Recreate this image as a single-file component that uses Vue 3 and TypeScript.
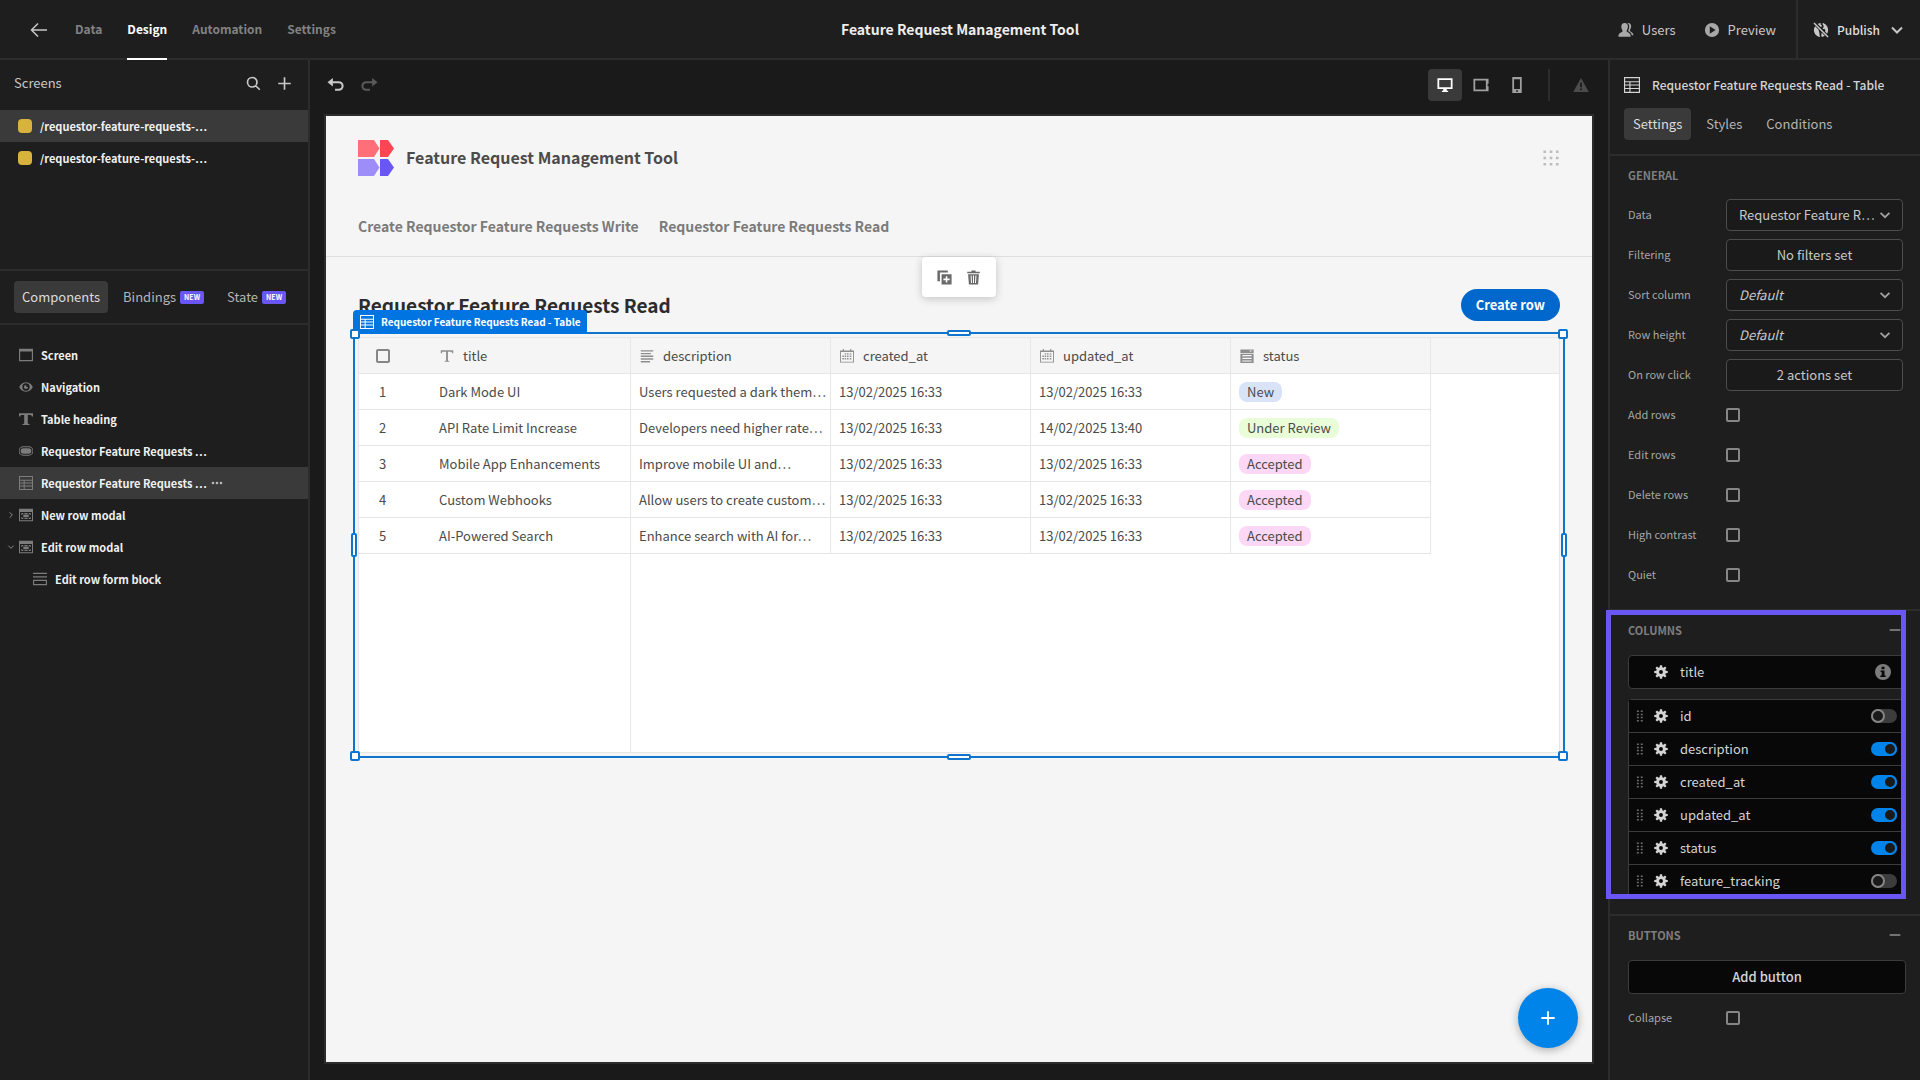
<script setup lang="ts">
import { h, ref } from 'vue'

interface Glyph {
  d: string
  stroke?: number
}

// All glyphs are drawn on an 18 x 18 grid.
const glyphs: Record<string, Glyph> = {
  back: { d: 'M17 9H1.5M8 2.5 1.5 9 8 15.500', stroke: 1.5 },
  search: { d: 'M7.500 1.800a5.700 5.700 0 1 0 0 11.400a5.700 5.700 0 1 0 0-11.400M11.700 11.700 16.500 16.500', stroke: 2 },
  plus: { d: 'M9 1.500V16.500M1.500 9H16.500', stroke: 2 },
  undo: { d: 'M5 5.500H12.500a4 4 0 0 1 0 8H8.500', stroke: 2.2 },
  undoHead: { d: 'M6.200 1V10L0.500 5.500Z' },
  chevron: { d: 'M4 6.500 9 11.500 14 6.500', stroke: 2 },
  chevronRight: { d: 'M6 3 12 9 6 15', stroke: 2 },
  chevronDown: { d: 'M3 6 9 12 15 6', stroke: 2 },
  minus: { d: 'M3 9H15', stroke: 2 },
  more: { d: 'M1 9a2 2 0 1 0 4 0a2 2 0 1 0-4 0M7 9a2 2 0 1 0 4 0a2 2 0 1 0-4 0M13 9a2 2 0 1 0 4 0a2 2 0 1 0-4 0' },
  users: {
    d: 'M7.500 1C10 1 11.200 2.900 11.200 5.200C11.200 7 10.600 8.300 9.800 9.300V10.800C9.800 11.300 14 12.200 14.200 15.500V16.500H0.500V15.500C0.700 12.200 5 11.300 5 10.800V9.300C4.300 8.300 3.700 7 3.700 5.200C3.700 2.900 5 1 7.500 1ZM10.500 1.200C13 0.500 14.800 2 14.800 4.800C14.800 6.500 14.200 7.700 13.500 8.500V10C13.500 10.600 17.300 11.500 17.500 15H15.500C15.200 12.500 13.500 11.300 11.500 10.500V9.500C12.200 8.500 12.600 7 12.600 5.200C12.600 3.500 11.900 2 10.500 1.200Z',
  },
  play: { d: 'M9 1a8 8 0 1 0 0 16a8 8 0 1 0 0-16ZM6.500 4.900 13 9 6.500 13.100Z' },
  globeOff: {
    d: 'M1.700 0.500 17.500 16.300 16.300 17.500 0.500 1.700ZM5.400 2.200C6.400 1.600 7.500 1.200 8.700 1.100C8.300 2 8.500 3 9.500 3.500C10.500 4 10 5 9 5.800ZM10.800 1.200C14.300 2 17 5.100 17 9C17 10.500 16.600 11.900 15.800 13.100L13.500 10.800C14.500 9.500 14 8 12.500 7.800L10.500 7.600C11.500 6.500 12.500 5.500 11.800 4.200C11.300 3.200 10.500 2.500 10.800 1.200ZM2.300 4.700 6.400 8.800C6 10.500 7.500 11 7.200 12.500C7 13.800 7.500 15 8 16.900C4.100 16.400 1 13.100 1 9C1 7.400 1.500 5.900 2.300 4.700ZM9.800 12.200 13.200 15.600C12.200 16.300 11.100 16.800 9.900 16.900C9.300 15.500 9.200 13.500 9.800 12.200Z',
  },
  desktop: { d: 'M0.500 1.500H17.500V13.500H11V15.500H12.500V17H5.500V15.500H7V13.500H0.500ZM2.500 3.500V11.500H15.500V3.500Z' },
  tablet: { d: 'M0.500 2H17.500V7.500H16.500V10.500H17.500V16H0.500ZM2.500 4V14H14.500V4Z' },
  phone: { d: 'M3.700 0H14.300V18H3.700ZM5.700 2.500V13.500H12.300V2.500ZM8 15V16.500H10V15Z' },
  alert: { d: 'M9 1 17.800 17H0.200ZM8 6.500V11.500H10V6.500ZM8 13V15H10V13Z' },
  apps: { d: 'M0.500 0.500H3.500V3.500H0.500ZM7.500 0.500H10.500V3.500H7.500ZM14.500 0.500H17.500V3.500H14.500ZM0.500 7.500H3.500V10.500H0.500ZM7.500 7.500H10.500V10.500H7.500ZM14.500 7.500H17.500V10.500H14.500ZM0.500 14.500H3.500V17.500H0.500ZM7.500 14.500H10.500V17.500H7.500ZM14.500 14.500H17.500V17.500H14.500Z' },
  screen: { d: 'M0 1H18V17H0ZM1.500 4.500V15.500H16.500V4.500Z' },
  eye: { d: 'M9 3C4.500 3 1.500 6 0.300 9C1.500 12 4.500 15 9 15C13.500 15 16.500 12 17.700 9C16.500 6 13.500 3 9 3ZM9 4.300A4.700 4.700 0 1 1 9 13.700A4.700 4.700 0 1 1 9 4.300ZM9 6.300A2.700 2.700 0 1 0 11.700 9L9.500 8.700Z' },
  heading: { d: 'M0 1.500H18V5.800H16.500C16.300 4.300 15.500 4 14 4H11.300V14C11.300 15 12 15.300 13.500 15.300V16.800H4.500V15.300C6 15.300 6.700 15 6.700 14V4H4C2.500 4 1.700 4.300 1.500 5.800H0Z' },
  text: { d: 'M1 1.500H17V5.500H15.500C15.300 4 14.800 3.500 13.500 3.500H10.200V14C10.200 15 10.800 15.300 12 15.300V16.500H6V15.300C7.200 15.300 7.800 15 7.800 14V3.500H4.500C3.200 3.500 2.700 4 2.500 5.500H1Z' },
  pill: { d: 'M5.500 3H12.500a6 6 0 0 1 0 12H5.500a6 6 0 0 1 0-12ZM5.500 4.200a4.800 4.800 0 0 0 0 9.600H12.500a4.800 4.800 0 0 0 0-9.600ZM5.700 5.400H12.300a3.600 3.600 0 0 1 0 7.200H5.700a3.600 3.600 0 0 1 0-7.200Z' },
  table: { d: 'M0 0H18V18H0ZM1.300 1.300V4.700H16.700V1.300ZM1.300 6V8.300H6V6ZM7.300 6V8.300H16.700V6ZM1.300 9.600V12.300H6V9.600ZM7.300 9.600V12.300H16.700V9.600ZM1.300 13.600V16.700H6V13.600ZM7.300 13.600V16.700H16.700V13.600Z' },
  modal: { d: 'M0 1H18V17H0ZM1.300 5V15.700H16.700V5ZM3 6.500H5.500V7.800H4.300V9H3ZM7 6.500H11V7.800H7ZM12.500 6.500H15V9H13.700V7.800H12.500ZM3 11.500H4.300V12.700H5.500V14H3ZM7 12.700H11V14H7ZM13.700 11.500H15V14H12.500V12.700H13.700ZM5.500 8.500H12.500V12H5.500Z' },
  form: { d: 'M0 1H18V2.500H0ZM0 5.500H18V7H0ZM0 10H18V17H0ZM1.500 11.500V15.500H16.500V11.500Z' },
  lines: { d: 'M1 1.500H17V3.200H1ZM1 5H14V6.700H1ZM1 8.500H17V10.200H1ZM1 12H17V13.700H1ZM1 15.500H13V17.200H1Z' },
  calendar: { d: 'M3.500 0H5V2H13V0H14.500V2H18V17.500H0V2H3.500ZM1.200 3.800V16.300H16.800V3.800ZM6 5.500H8V7.200H6ZM9 5.500H11V7.200H9ZM12.500 5.500H14.500V7.200H12.500ZM3 8.500H5V10.200H3ZM6 8.500H8V10.200H6ZM9 8.500H11V10.200H9ZM12.500 8.500H14.500V10.200H12.500ZM3 11.700H5V13.500H3ZM6 11.700H8V13.500H6ZM9 11.700H11V13.500H9ZM12.500 11.700H14.500V13.500H12.500Z' },
  dropdown: { d: 'M0.500 0.500H17.500V5H0.500ZM12 1.800 13.700 3.800 15.400 1.800ZM0.500 6H17.500V18H0.500ZM3 7.800V9.200H15V7.800ZM3 11.300V12.700H15V11.300ZM3 14.700V16.100H15V14.700Z' },
  duplicate: { d: 'M0.500 0.500H13V3H3.500V13.500H0.500ZM5.500 5H17.500V17.500H5.500ZM10.500 7.500V10.300H7.700V12.200H10.500V15H12.400V12.200H15.200V10.300H12.400V7.500Z' },
  trash: { d: 'M6.500 0.500H11.500V2H16.500V4H1.500V2H6.500ZM2.500 5H15.500L14.500 17.500H3.500ZM5.500 6.500 6 15.500H7.200L6.700 6.500ZM8.400 6.500V15.500H9.600V6.500ZM11.300 6.500 10.800 15.500H12L12.500 6.500Z' },
  gear: { d: 'M7.600 0.300H10.400L10.700 2.900L12.100 3.500L14.200 1.900L16.100 3.800L14.500 5.900L15.100 7.300L17.700 7.600V10.400L15.100 10.700L14.500 12.100L16.100 14.200L14.200 16.100L12.100 14.500L10.700 15.100L10.400 17.700H7.600L7.300 15.100L5.900 14.500L3.800 16.100L1.900 14.200L3.500 12.100L2.900 10.700L0.300 10.400V7.600L2.900 7.300L3.500 5.900L1.900 3.800L3.800 1.900L5.900 3.500L7.300 2.900ZM9 6.500a2.500 2.500 0 1 0 0 5a2.500 2.500 0 1 0 0-5Z' },
  info: { d: 'M9 0a9 9 0 1 0 0 18a9 9 0 1 0 0-18ZM7.300 3H10.700V6H7.300ZM6.300 7.300H10.700V12.800H12V14.500H6V12.800H7.500V9H6.300Z' },
  grip: { d: 'M5 2H7.500V4H5ZM10 2H12.500V4H10ZM5 6H7.500V8H5ZM10 6H12.500V8H10ZM5 10H7.500V12H5ZM10 10H12.500V12H10ZM5 14H7.500V16H5ZM10 14H12.500V16H10Z' },
}

const Icon = (props: { name: string; size?: number }) => {
  const size = props.size ?? 14
  const names = props.name === 'undo' ? ['undo', 'undoHead'] : [props.name]
  return h(
    'svg',
    { viewBox: '0 0 18 18', width: size, height: size, 'aria-hidden': 'true' },
    names.map((n) => {
      const g = glyphs[n]
      return g.stroke
        ? h('path', { d: g.d, fill: 'none', stroke: 'currentColor', 'stroke-width': g.stroke })
        : h('path', { d: g.d, fill: 'currentColor', 'fill-rule': 'evenodd' })
    }),
  )
}
Icon.props = ['name', 'size']

const appName = 'Feature Request Management Tool'
const blockName = 'Requestor Feature Requests Read - Table'

const sections = ['Data', 'Design', 'Automation', 'Settings']
const screens = ['/requestor-feature-requests-…', '/requestor-feature-requests-…']

const tree = [
  { label: 'Screen', icon: 'screen' },
  { label: 'Navigation', icon: 'eye' },
  { label: 'Table heading', icon: 'heading' },
  { label: 'Requestor Feature Requests …', icon: 'pill' },
  { label: 'Requestor Feature Requests …', icon: 'table', selected: true },
  { label: 'New row modal', icon: 'modal', arrow: 'chevronRight' },
  { label: 'Edit row modal', icon: 'modal', arrow: 'chevronDown' },
  { label: 'Edit row form block', icon: 'form', child: true },
]

const gridColumns = [
  { name: 'title', icon: 'text' },
  { name: 'description', icon: 'lines' },
  { name: 'created_at', icon: 'calendar' },
  { name: 'updated_at', icon: 'calendar' },
  { name: 'status', icon: 'dropdown' },
]

const rows = [
  { title: 'Dark Mode UI', description: 'Users requested a dark them…', created: '13/02/2025 16:33', updated: '13/02/2025 16:33', status: 'New', tone: 'blue' },
  { title: 'API Rate Limit Increase', description: 'Developers need higher rate…', created: '13/02/2025 16:33', updated: '14/02/2025 13:40', status: 'Under Review', tone: 'green' },
  { title: 'Mobile App Enhancements', description: 'Improve mobile UI and…', created: '13/02/2025 16:33', updated: '13/02/2025 16:33', status: 'Accepted', tone: 'pink' },
  { title: 'Custom Webhooks', description: 'Allow users to create custom…', created: '13/02/2025 16:33', updated: '13/02/2025 16:33', status: 'Accepted', tone: 'pink' },
  { title: 'AI-Powered Search', description: 'Enhance search with AI for…', created: '13/02/2025 16:33', updated: '13/02/2025 16:33', status: 'Accepted', tone: 'pink' },
]

const settings = [
  { id: 'data', label: 'Data', type: 'select', value: 'Requestor Feature R…' },
  { id: 'filtering', label: 'Filtering', type: 'button', value: 'No filters set' },
  { id: 'sort', label: 'Sort column', type: 'select', value: 'Default', placeholder: true },
  { id: 'height', label: 'Row height', type: 'select', value: 'Default', placeholder: true },
  { id: 'click', label: 'On row click', type: 'button', value: '2 actions set' },
  { id: 'add', label: 'Add rows', type: 'check' },
  { id: 'edit', label: 'Edit rows', type: 'check' },
  { id: 'delete', label: 'Delete rows', type: 'check' },
  { id: 'contrast', label: 'High contrast', type: 'check' },
  { id: 'quiet', label: 'Quiet', type: 'check' },
]

const columns = ref([
  { name: 'id', on: false },
  { name: 'description', on: true },
  { name: 'created_at', on: true },
  { name: 'updated_at', on: true },
  { name: 'status', on: true },
  { name: 'feature_tracking', on: false },
])

const handles = ['tl', 'tr', 'bl', 'br', 'top', 'bottom', 'start', 'end']
</script>

<template>
  <div class="builder" lang="en">
    <header class="topbar">
      <div class="top-left">
        <button class="bare back" aria-label="Back"><Icon name="back" :size="18" /></button>
        <nav class="sections">
          <a v-for="s in sections" :key="s" href="#" :class="{ active: s === 'Design' }">{{ s }}</a>
        </nav>
      </div>
      <h1 class="app-title">{{ appName }}</h1>
      <div class="top-right">
        <button class="bare action"><Icon name="users" :size="16" />Users</button>
        <button class="bare action"><Icon name="play" :size="16" />Preview</button>
        <button class="bare action publish"><Icon name="globeOff" :size="16" />Publish<Icon name="chevron" :size="18" /></button>
      </div>
    </header>

    <div class="body">
      <aside class="left">
        <section class="screens">
          <div class="screens-head">
            <h2>Screens</h2>
            <button class="bare" aria-label="Search"><Icon name="search" :size="15" /></button>
            <button class="bare" aria-label="Add screen"><Icon name="plus" :size="15" /></button>
          </div>
          <a v-for="(s, i) in screens" :key="i" href="#" class="row screen-row" :class="{ selected: i === 0 }">
            <span class="swatch"></span><span class="label">{{ s }}</span>
          </a>
        </section>
        <div class="tabs left-tabs">
          <button class="tab active">Components</button>
          <button class="tab">Bindings<span class="new">NEW</span></button>
          <button class="tab">State<span class="new">NEW</span></button>
        </div>
        <div class="tree">
          <a v-for="(n, i) in tree" :key="i" href="#" class="row node" :class="{ selected: n.selected, child: n.child }">
            <span class="arrow"><Icon v-if="n.arrow" :name="n.arrow" :size="8" /></span>
            <Icon :name="n.icon" class="node-icon" />
            <span class="label">{{ n.label }}</span>
            <Icon v-if="n.selected" name="more" :size="12" class="more" />
          </a>
        </div>
      </aside>

      <main class="center">
        <div class="tools">
          <button class="bare" aria-label="Undo"><Icon name="undo" :size="17" /></button>
          <button class="bare redo" aria-label="Redo"><Icon name="undo" :size="17" class="flip" /></button>
          <div class="devices">
            <button class="device active" aria-label="Desktop"><Icon name="desktop" :size="16" /></button>
            <button class="device" aria-label="Tablet"><Icon name="tablet" :size="16" /></button>
            <button class="device" aria-label="Mobile"><Icon name="phone" :size="16" /></button>
          </div>
          <button class="bare warn" aria-label="Warnings"><Icon name="alert" :size="16" /></button>
        </div>

        <div class="canvas">
          <div class="app-head">
            <div class="brand">
              <svg class="logo" viewBox="0 0 36 36" width="36" height="36" aria-hidden="true">
                <path fill="#ff6f78" d="M0 0H16L21.500 8.500L16 17H0Z" />
                <path fill="#fe4553" d="M22 0H30L36 8.500L30 17H22Z" />
                <path fill="#9d8df8" d="M0 19H16L21.500 27.500L16 36H0Z" />
                <path fill="#6a56f5" d="M22 19H30L36 27.500L30 36H22Z" />
              </svg>
              <span class="brand-name">{{ appName }}</span>
              <button class="bare apps" aria-label="Apps"><Icon name="apps" :size="16" /></button>
            </div>
            <nav class="links">
              <a href="#">Create Requestor Feature Requests Write</a>
              <a href="#">Requestor Feature Requests Read</a>
            </nav>
          </div>

          <div class="page">
            <div class="page-head">
              <h2>Requestor Feature Requests Read</h2>
              <button class="create">Create row</button>
            </div>

            <div class="block">
              <table class="grid">
                <colgroup>
                  <col class="c-num" />
                  <col v-for="c in gridColumns" :key="c.name" class="c-data" />
                  <col />
                </colgroup>
                <thead>
                  <tr>
                    <th class="num"><input type="checkbox" class="box" aria-label="Select all rows" /></th>
                    <th v-for="c in gridColumns" :key="c.name" class="cell">
                      <span class="head"><Icon :name="c.icon" />{{ c.name }}</span>
                    </th>
                    <th></th>
                  </tr>
                </thead>
                <tbody>
                  <tr v-for="(r, i) in rows" :key="i">
                    <td class="num">{{ i + 1 }}</td>
                    <td class="cell">{{ r.title }}</td>
                    <td class="cell">{{ r.description }}</td>
                    <td class="cell">{{ r.created }}</td>
                    <td class="cell">{{ r.updated }}</td>
                    <td class="cell"><span class="badge" :class="r.tone">{{ r.status }}</span></td>
                  </tr>
                  <tr class="blank">
                    <td colspan="2"></td>
                    <td colspan="5"></td>
                  </tr>
                </tbody>
              </table>

              <div class="selection">
                <span v-for="p in handles" :key="p" class="handle" :class="p"></span>
                <div class="tag"><Icon name="table" />{{ blockName }}</div>
              </div>
              <div class="popover">
                <button class="bare" aria-label="Duplicate"><Icon name="duplicate" :size="15" /></button>
                <button class="bare" aria-label="Delete"><Icon name="trash" :size="15" /></button>
              </div>
            </div>
          </div>
          <button class="fab" aria-label="Add component"><Icon name="plus" :size="16" /></button>
        </div>
      </main>

      <aside class="right">
        <div class="right-head">
          <h2><Icon name="table" :size="16" />{{ blockName }}</h2>
          <div class="tabs right-tabs">
            <button class="tab active">Settings</button>
            <button class="tab">Styles</button>
            <button class="tab">Conditions</button>
          </div>
        </div>

        <section class="group general">
          <h3>GENERAL</h3>
          <div v-for="s in settings" :key="s.id" class="setting">
            <label :for="s.id">{{ s.label }}</label>
            <div v-if="s.type === 'select'" class="picker">
              <select :id="s.id" :class="{ placeholder: s.placeholder }">
                <option>{{ s.value }}</option>
              </select>
              <Icon name="chevron" :size="16" />
            </div>
            <button v-else-if="s.type === 'button'" :id="s.id" class="control">{{ s.value }}</button>
            <input v-else :id="s.id" type="checkbox" class="box" />
          </div>
        </section>

        <section class="group columns">
          <h3>COLUMNS<Icon name="minus" :size="16" /></h3>
          <div class="column primary">
            <span class="grip"></span><Icon name="gear" /><span class="column-name">title</span>
            <Icon name="info" :size="16" class="info" />
          </div>
          <div class="column-list">
            <label v-for="c in columns" :key="c.name" class="column">
              <Icon name="grip" class="grip" /><Icon name="gear" /><span class="column-name">{{ c.name }}</span>
              <input v-model="c.on" type="checkbox" role="switch" class="switch" />
            </label>
          </div>
          <div class="highlight"></div>
        </section>

        <section class="group">
          <h3>BUTTONS<Icon name="minus" :size="16" /></h3>
          <button class="add">Add button</button>
          <div class="setting">
            <label for="collapse">Collapse</label>
            <input id="collapse" type="checkbox" class="box" />
          </div>
        </section>
      </aside>
    </div>
  </div>
</template>

<style>
body {
  background: #1e1e1e;
}
</style>

<style scoped>
.builder,
.builder * {
  box-sizing: border-box;
}

.builder {
  display: flex;
  flex-direction: column;
  min-height: 100vh;
  background: #1e1e1e;
  color: #c8c8c8;
  font-family: 'Noto Sans CJK SC', 'Noto Sans', sans-serif;
  font-size: 13px;
  line-height: 20px;
}

svg {
  display: block;
  flex: none;
}

h1,
h2,
h3 {
  margin: 0;
}

a {
  color: inherit;
  text-decoration: none;
}

button,
select {
  font: inherit;
  color: inherit;
  cursor: pointer;
}

.bare {
  display: flex;
  align-items: center;
  padding: 0;
  border: 0;
  background: none;
}

.box {
  appearance: none;
  display: block;
  flex: none;
  width: 14px;
  height: 14px;
  margin: 0;
  border: 2px solid #868686;
  border-radius: 2px;
}

/* Top bar */
.topbar {
  display: grid;
  grid-template-columns: 1fr auto 1fr;
  height: 60px;
  border-bottom: 2px solid #2c2c2c;
}

.top-left {
  display: flex;
  padding-left: 30px;
  gap: 27px;
}

.sections {
  display: flex;
  gap: 25px;
  height: 60px;
  color: #828282;
  font-size: 12px;
  font-weight: 600;
}

.sections a {
  padding: 19px 0;
  border-bottom: 2px solid transparent;
}

.sections .active {
  border-color: #fff;
  color: #fff;
}

.app-title {
  align-self: center;
  padding-bottom: 2px;
  color: #ededed;
  font-size: 14px;
  font-weight: 600;
  line-height: 20px;
}

.top-right {
  display: flex;
  justify-content: flex-end;
  gap: 28px;
}

.action {
  gap: 8px;
}

.action svg {
  color: #a8a8a8;
}

.publish {
  margin-left: -8px;
  padding: 0 14px 0 15px;
  border-left: 2px solid #2c2c2c;
  color: #dedede;
  font-size: 12px;
  font-weight: 500;
}

.publish svg {
  color: #c8c8c8;
}

/* Layout */
.body {
  display: flex;
  flex: 1;
}

.left {
  flex: none;
  width: 310px;
  border-right: 2px solid #2c2c2c;
}

.center {
  display: flex;
  flex: 1;
  flex-direction: column;
  min-width: 0;
  padding: 0 14px 16px;
  background: #1a1a1a;
}

.right {
  flex: none;
  width: 312px;
  border-left: 2px solid #2c2c2c;
}

/* Left panel */
.screens {
  height: 211px;
  border-bottom: 2px solid #2c2c2c;
}

.screens-head {
  display: flex;
  align-items: center;
  gap: 16px;
  height: 50px;
  padding: 0 16px 4px 14px;
}

.screens-head h2 {
  flex: 1;
  font-size: 13px;
  font-weight: 400;
}

.row {
  display: flex;
  align-items: center;
  height: 32px;
  color: #f0f0f0;
  font-size: 11px;
  font-weight: 600;
}

.row.selected {
  background: #3a3a3a;
}

.row .label {
  min-width: 166px;
  white-space: nowrap;
}

.screen-row {
  gap: 8px;
  padding-left: 18px;
}

.swatch {
  width: 14px;
  height: 14px;
  border-radius: 4px;
  background: #d8b23c;
}

.tabs {
  display: flex;
}

.tab {
  display: flex;
  align-items: center;
  gap: 4px;
  height: 32px;
  padding: 0 8px;
  border: 0;
  border-radius: 4px;
  background: none;
  color: #b4b4b4;
}

.tab.active {
  background: #3a3a3a;
  color: #dcdcdc;
}

.left-tabs {
  gap: 7px;
  padding: 10px 14px;
  border-bottom: 2px solid #2c2c2c;
}

.new {
  padding: 0 4px;
  border-radius: 2px;
  background: #6a56f5;
  color: #fff;
  font-size: 7px;
  font-weight: 700;
  line-height: 13px;
}

.tree {
  padding-top: 14px;
}

.node {
  padding-left: 7px;
}

.child {
  padding-left: 21px;
}

.arrow {
  width: 12px;
  color: #9a9a9a;
}

.node-icon {
  margin-right: 8px;
  color: #7c7c7c;
}

.more {
  margin-left: 4px;
  color: #b8b8b8;
}

/* Canvas toolbar */
.tools {
  display: flex;
  align-items: center;
  gap: 17px;
  height: 54px;
  padding: 0 5px 4px 3px;
}

.tools .redo {
  color: #5a5a5a;
}

.flip {
  transform: scaleX(-1);
}

.devices {
  display: flex;
  gap: 2px;
  margin-left: auto;
  padding-right: 14px;
  border-right: 2px solid #2c2c2c;
}

.device {
  display: grid;
  place-items: center;
  width: 34px;
  height: 32px;
  padding: 0;
  border: 0;
  border-radius: 4px;
  background: none;
  color: #a0a0a0;
}

.device.active {
  background: #3a3a3a;
  color: #fff;
}

.warn {
  margin-left: 6px;
  color: #4c4c4c;
}

/* Previewed app */
.canvas {
  position: relative;
  flex: 1;
  border: 2px solid #2c2c2c;
  background: #f5f5f5;
  color: #4b4b4b;
}

.app-head {
  padding: 24px 32px 17px;
  border-bottom: 1px solid #dedede;
}

.brand {
  display: flex;
  align-items: center;
  gap: 12px;
}

.brand-name {
  padding-bottom: 2px;
  font-size: 16px;
  font-weight: 600;
  line-height: 24px;
}

.apps {
  margin-left: auto;
  margin-right: 1px;
  color: #bdbdbd;
}

.links {
  display: flex;
  gap: 20px;
  padding-top: 37px;
  color: #7b7b7b;
  font-size: 14px;
  font-weight: 600;
  line-height: 26px;
}

.page {
  padding: 32px;
}

.page-head {
  display: flex;
  align-items: center;
  justify-content: space-between;
  height: 32px;
  margin-bottom: 16px;
}

.page-head h2 {
  color: #2c2c2c;
  font-size: 19px;
  font-weight: 600;
  line-height: 28px;
}

.create {
  height: 32px;
  padding: 0 15px;
  border: 0;
  border-radius: 16px;
  background: #0067cc;
  color: #fff;
  font-weight: 600;
}

.block {
  position: relative;
}

.grid {
  width: 100%;
  table-layout: fixed;
  border: 1px solid #e6e6e6;
  border-spacing: 0;
  background: #fff;
}

.c-num {
  width: 72px;
}

.c-data {
  width: 200px;
}

.grid th,
.grid td {
  height: 36px;
  padding: 0;
  text-align: left;
  font-weight: 400;
  white-space: nowrap;
}

.grid th {
  border-bottom: 1px solid #e6e6e6;
  background: #f5f5f5;
}

.grid .num,
.grid .cell {
  border-bottom: 1px solid #e6e6e6;
}

.grid .num {
  padding-left: 17px;
}

.grid td.num {
  padding-left: 20px;
}

.grid .cell {
  padding: 0 8px;
  border-right: 1px solid #e6e6e6;
}

.grid .blank td {
  height: 198px;
}

.blank td:first-child {
  border-right: 1px solid #e6e6e6;
}

.head {
  display: flex;
  align-items: center;
  gap: 9px;
  padding-left: 1px;
}

.head svg {
  color: #8e8e8e;
}

.badge {
  display: inline-block;
  padding: 0 8px;
  border-radius: 8px;
  line-height: 20px;
}

.badge.blue {
  background: #d8e3f8;
}

.badge.green {
  background: #e9fdd9;
}

.badge.pink {
  background: #fcd8f6;
}

.selection {
  position: absolute;
  inset: -5px;
  border: 2px solid #0f74cb;
  pointer-events: none;
}

.tag {
  position: absolute;
  left: -2px;
  bottom: 100%;
  display: flex;
  align-items: center;
  gap: 7px;
  height: 24px;
  padding: 0 6px 0 7px;
  border-radius: 4px 4px 0 0;
  background: #0074e0;
  color: #fff;
  font-size: 10px;
  font-weight: 600;
  white-space: nowrap;
}

.handle {
  position: absolute;
  z-index: 1;
  width: 10px;
  height: 10px;
  border: 2px solid #0f74cb;
  border-radius: 2px;
  background: #fff;
}

.tl,
.tr {
  top: -5px;
}

.bl,
.br {
  bottom: -5px;
}

.tl,
.bl {
  left: -5px;
}

.tr,
.br {
  right: -5px;
}

.top,
.bottom {
  left: calc(50% - 12px);
  width: 24px;
  height: 6px;
}

.top {
  top: -4px;
}

.bottom {
  bottom: -4px;
}

.start,
.end {
  top: calc(50% - 12px);
  width: 6px;
  height: 24px;
}

.start {
  left: -4px;
}

.end {
  right: -4px;
}

.popover {
  position: absolute;
  bottom: calc(100% + 40px);
  left: 50%;
  display: flex;
  align-items: center;
  gap: 14px;
  height: 40px;
  padding: 0 15px;
  transform: translateX(-50%);
  border-radius: 4px;
  background: #fff;
  box-shadow: 0 2px 8px rgba(0, 0, 0, 0.2);
  color: #6a6a6a;
}

.fab {
  position: absolute;
  right: 14px;
  bottom: 14px;
  display: grid;
  place-items: center;
  width: 60px;
  height: 60px;
  padding: 0;
  border: 0;
  border-radius: 50%;
  background: #0084ea;
  box-shadow: 0 2px 8px rgba(0, 0, 0, 0.3);
  color: #fff;
}

/* Right panel */
.right-head {
  padding: 14px;
  border-bottom: 2px solid #2c2c2c;
}

.right-head h2 {
  display: flex;
  align-items: center;
  gap: 12px;
  height: 22px;
  margin-bottom: 12px;
  color: #d4d4d4;
  font-size: 12px;
  font-weight: 500;
  white-space: nowrap;
}

.right-tabs {
  gap: 6px;
}

.right-tabs .tab {
  padding: 0 9px;
}

.group {
  padding: 10px 14px 16px 18px;
}

.group + .group {
  border-top: 2px solid #2c2c2c;
}

.group h3 {
  display: flex;
  align-items: center;
  justify-content: space-between;
  height: 18px;
  padding-right: 3px;
  color: #7f7f7f;
  font-size: 11px;
  font-weight: 600;
}

.general {
  padding-bottom: 14px;
}

.general h3 {
  margin-bottom: 11px;
}

.setting {
  display: flex;
  align-items: center;
  height: 40px;
  padding-right: 3px;
}

.setting label {
  width: 98px;
  padding-bottom: 2px;
  color: #a6a6a6;
  font-size: 11px;
}

.control,
.picker select {
  width: 100%;
  height: 32px;
  border: 1px solid #4c4c4c;
  border-radius: 4px;
  background: #1a1a1a;
}

.control {
  flex: 1;
}

.picker {
  position: relative;
  flex: 1;
  min-width: 0;
}

.picker select {
  appearance: none;
  padding: 0 28px 0 12px;
}

.picker .placeholder {
  font-style: italic;
}

.picker svg {
  position: absolute;
  top: 8px;
  right: 10px;
  color: #a0a0a0;
  pointer-events: none;
}

.columns {
  position: relative;
}

.columns h3 {
  margin-bottom: 16px;
}

.column {
  display: flex;
  align-items: center;
  height: 33px;
  padding: 0 8px;
  background: #080808;
  color: #d4d4d4;
}

.primary {
  height: 34px;
  margin-bottom: 10px;
  border: 1px solid #3c3c3c;
  border-radius: 4px;
}

.column-list {
  border: 1px solid #3c3c3c;
  border-radius: 4px;
}

.column-list .column:first-child {
  height: 32px;
}

.column + .column {
  border-top: 1px solid #3c3c3c;
}

.grip {
  width: 14px;
  margin: 0 4px 0 -4px;
  color: #6e6e6e;
}

.columns .grip + svg {
  margin: 0 12px 0 3px;
}

.column-name {
  flex: 1;
}

.info {
  margin-right: 6px;
  color: #7c7c7c;
}

.switch {
  appearance: none;
  position: relative;
  width: 26px;
  height: 14px;
  margin: 0;
  border-radius: 7px;
  background: #3c3c3c;
}

.switch::before {
  content: '';
  position: absolute;
  left: 0;
  width: 14px;
  height: 14px;
  box-sizing: border-box;
  border: 2px solid #868686;
  border-radius: 50%;
  background: #1a1a1a;
}

.switch:checked {
  background: #0084ea;
}

.switch:checked::before {
  left: 12px;
  border-color: #0084ea;
}

.highlight {
  position: absolute;
  inset: -1px 14px 15px -4px;
  border: 5px solid #6a56f5;
  pointer-events: none;
}

.add {
  width: 100%;
  height: 34px;
  margin: 16px 0 4px;
  border: 1px solid #3c3c3c;
  border-radius: 4px;
  background: #080808;
  color: #d4d4d4;
  font-weight: 500;
}
</style>
